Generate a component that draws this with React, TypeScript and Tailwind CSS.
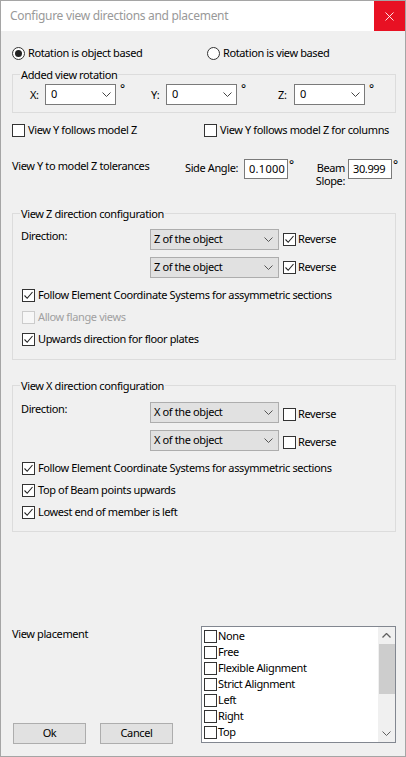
import { X } from "lucide-react";

const ui = "font-['Noto_Sans',sans-serif] text-[11px] tracking-[-0.38px] text-black";

function Check({ checked = false, disabled = false }: { checked?: boolean; disabled?: boolean }) {
  return (
    <span
      className={`flex h-[13px] w-[13px] shrink-0 items-center justify-center border ${
        disabled ? "border-[#cccccc] bg-[#f7f7f7]" : "border-[#333333] bg-white"
      }`}
    >
      {checked && (
        <svg width="11" height="11" viewBox="0 0 11 11">
          <polyline points="1.5,5.5 4.2,8.3 9.5,2" fill="none" stroke="#222" strokeWidth="1.1" />
        </svg>
      )}
    </span>
  );
}

function Radio({ checked = false }: { checked?: boolean }) {
  return (
    <span className="flex h-[13px] w-[13px] shrink-0 items-center justify-center rounded-full border border-[#333333] bg-white">
      {checked && <span className="h-[7px] w-[7px] rounded-full bg-[#222]" />}
    </span>
  );
}

function Chevron({ color = "#444" }: { color?: string }) {
  return (
    <svg width="9" height="5" viewBox="0 0 9 5" className="shrink-0">
      <polyline points="0.5,0.5 4.5,4.5 8.5,0.5" fill="none" stroke={color} strokeWidth="1" />
    </svg>
  );
}

// editable combo box (white)
function Combo({ value }: { value: string }) {
  return (
    <div className="flex h-[21px] w-[71px] items-center border border-[#7a7a7a] bg-white pl-[5px] pr-[4px]">
      <span className="flex-1">{value}</span>
      <Chevron />
    </div>
  );
}

// drop-down list (grey button style)
function DropList({ value }: { value: string }) {
  return (
    <div className="flex h-[21px] w-[129px] items-center border border-[#adadad] bg-[#e1e1e1] pl-[3px] pr-[5px]">
      <span className="flex-1">{value}</span>
      <Chevron color="#555" />
    </div>
  );
}

function CheckRow({ label, checked, disabled }: { label: string; checked?: boolean; disabled?: boolean }) {
  return (
    <div className="flex h-[16px] items-center">
      <Check checked={checked} disabled={disabled} />
      <span className={`ml-[3px] ${disabled ? "text-[#a0a0a0]" : ""}`}>{label}</span>
    </div>
  );
}

function Group({ title, children, className = "" }: { title: string; children: React.ReactNode; className?: string }) {
  return (
    <div className={`w-[384px] border border-[#dcdcdc] ${className}`}>
      <div className="-mt-[8px] ml-[7px] w-fit bg-[#f0f0f0] px-[1px] leading-[16px]">{title}</div>
      {children}
    </div>
  );
}

function AxisCell({ axis, labelW, cellW }: { axis: string; labelW: string; cellW: string }) {
  return (
    <div className={`flex items-start ${cellW}`}>
      <span className={`${labelW} h-[21px] leading-[21px]`}>{axis}</span>
      <Combo value="0" />
      <span className="ml-[4px] -mt-[3px] text-[12px] leading-[16px]">°</span>
    </div>
  );
}

function DirectionRows({ value, checked }: { value: string; checked: boolean }) {
  return (
    <div className="flex">
      <span className="w-[137px] pl-[8px] leading-[16px] -mt-[1px]">Direction:</span>
      <div className="flex flex-col gap-[7px]">
        {[0, 1].map((i) => (
          <div key={i} className="flex items-center">
            <DropList value={value} />
            <span className={`ml-[4px] flex items-center ${checked ? "" : "mt-[4px]"}`}>
              <Check checked={checked} />
              <span className="ml-[2px]">Reverse</span>
            </span>
          </div>
        ))}
      </div>
    </div>
  );
}

const placements = ["None", "Free", "Flexible Alignment", "Strict Alignment", "Left", "Right", "Top"];

export default function App() {
  return (
    <div className={`${ui} flex h-[757px] w-[406px] flex-col border border-[#a5a5a5] bg-[#f0f0f0]`}>
      {/* title bar */}
      <div className="flex h-[30px] shrink-0 items-center bg-white">
        <span className="flex-1 pl-[9px] text-[12px] tracking-[-0.3px] text-[#999999]">
          Configure view directions and placement
        </span>
        <span className="flex h-[30px] w-[31px] items-center justify-center bg-[#e81123]">
          <X size={15} strokeWidth={1.4} color="#ffffff" />
        </span>
      </div>

      <div className="flex flex-col pl-[11px]">
        <div className="mt-[14px] flex h-[16px] items-center">
          <div className="flex w-[195px] items-center">
            <Radio checked />
            <span className="ml-[3px]">Rotation is object based</span>
          </div>
          <div className="flex items-center">
            <Radio />
            <span className="ml-[3px]">Rotation is view based</span>
          </div>
        </div>

        <Group title="Added view rotation" className="mt-[13px] pb-[7px]">
          <div className="mt-[1px] flex pl-[17px]">
            <AxisCell axis="X:" labelW="w-[15px]" cellW="w-[121px]" />
            <AxisCell axis="Y:" labelW="w-[15px]" cellW="w-[127px]" />
            <AxisCell axis="Z:" labelW="w-[16px]" cellW="" />
          </div>
        </Group>

        <div className="mt-[9px] flex">
          <div className="w-[192px]">
            <CheckRow label="View Y follows model Z" />
          </div>
          <CheckRow label="View Y follows model Z for columns" />
        </div>

        {/* tolerances */}
        <div className="mt-[20px] flex h-[30px] items-start">
          <span className="w-[173px] leading-[16px]">View Y to model Z tolerances</span>
          <span className="mt-[2px] w-[59px] leading-[16px]">Side Angle:</span>
          <div className="mt-[1px] flex h-[20px] w-[44px] items-center overflow-hidden border border-[#7a7a7a] bg-white pl-[4px]">
            <span className="whitespace-nowrap tracking-[0.3px]">0.1000</span>
          </div>
          <span className="w-[26px] -mt-[1px] pl-[1px] text-[12px] leading-[16px]">°</span>
          <span className="mt-[3px] w-[31px] text-right leading-[13px]">
            Beam
            <br />
            Slope:
          </span>
          <div className="ml-[3px] mt-[1px] flex h-[20px] w-[44px] items-center overflow-hidden border border-[#7a7a7a] bg-white pl-[4px]">
            <span className="whitespace-nowrap">30.999</span>
          </div>
          <span className="-mt-[1px] pl-[1px] text-[12px] leading-[16px]">°</span>
        </div>

        <Group title="View Z direction configuration" className="mt-[25px] pb-[12px]">
          <div className="mt-[7px]">
            <DirectionRows value="Z of the object" checked />
          </div>
          <div className="mt-[9px] flex flex-col gap-[6px] pl-[9px]">
            <CheckRow label="Follow Element Coordinate Systems for assymmetric sections" checked />
            <CheckRow label="Allow flange views" disabled />
            <CheckRow label="Upwards direction for floor plates" checked />
          </div>
        </Group>

        <Group title="View X direction configuration" className="mt-[25px] pb-[11px]">
          <div className="mt-[8px]">
            <DirectionRows value="X of the object" checked={false} />
          </div>
          <div className="mt-[9px] flex flex-col gap-[6px] pl-[9px]">
            <CheckRow label="Follow Element Coordinate Systems for assymmetric sections" checked />
            <CheckRow label="Top of Beam points upwards" checked />
            <CheckRow label="Lowest end of member is left" checked />
          </div>
        </Group>

        {/* placement + buttons */}
        <div className="mt-[94px] flex">
          <div className="flex w-[189px] flex-col">
            <span className="leading-[16px]">View placement</span>
            <div className="mt-[81px] flex gap-[14px] pl-[1px]">
              <button className="h-[21px] w-[73px] border border-[#adadad] bg-[#e1e1e1]">Ok</button>
              <button className="h-[21px] w-[73px] border border-[#adadad] bg-[#e1e1e1]">Cancel</button>
            </div>
          </div>
          <div className="flex h-[117px] w-[195px] border border-[#828790] bg-white">
            <div className="flex flex-1 flex-col overflow-hidden pl-[2px] pt-[1px]">
              {placements.map((p) => (
                <div key={p} className="flex h-[16px] shrink-0 items-center">
                  <Check />
                  <span className="ml-[1px]">{p}</span>
                </div>
              ))}
            </div>
            <div className="flex w-[17px] flex-col items-center bg-[#f0f0f0]">
              <div className="flex h-[17px] w-full items-center justify-center">
                <svg width="9" height="5" viewBox="0 0 9 5">
                  <polyline points="0.5,4.5 4.5,0.5 8.5,4.5" fill="none" stroke="#606060" strokeWidth="1.3" />
                </svg>
              </div>
              <div className="h-[50px] w-[16px] bg-[#cdcdcd]" />
              <div className="flex-1" />
              <div className="flex h-[17px] w-full items-center justify-center">
                <Chevron color="#606060" />
              </div>
            </div>
          </div>
        </div>
      </div>
    </div>
  );
}
